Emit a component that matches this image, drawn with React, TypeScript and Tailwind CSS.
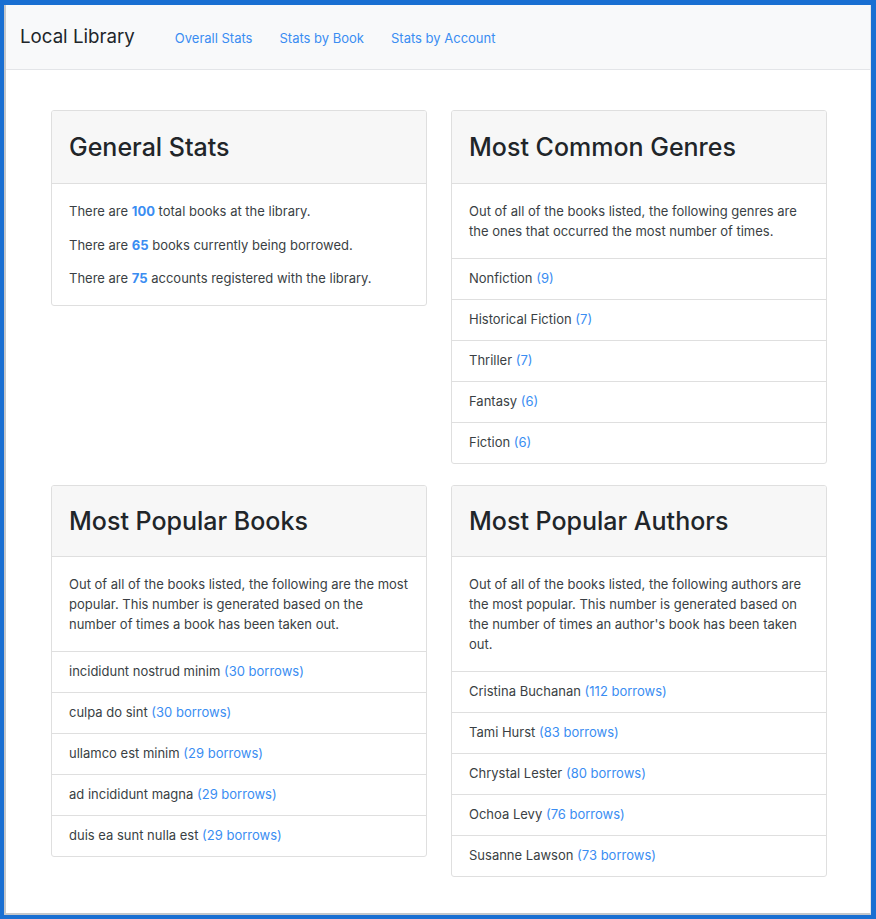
import React from "react";

const font = { fontFamily: "Inter, 'Liberation Sans', Arial, sans-serif" };

function Card({ title, tall = true, children }: { title: string; tall?: boolean; children: React.ReactNode }) {
  return (
    <div className="bg-white border border-[#dfdfdf] rounded-[3px] overflow-hidden">
      <div
        className={
          (tall ? "h-[73px] " : "h-[71px] ") +
          "bg-[#f7f7f7] border-b border-[#dfdfdf] flex items-center px-[17px]"
        }
      >
        <h2 className="text-[25px] font-medium text-[#212529] leading-[32px]">{title}</h2>
      </div>
      {children}
    </div>
  );
}

function Body({ children }: { children: React.ReactNode }) {
  return <div className="px-[17px] pt-[17px] pb-[17px] text-[13px] leading-[20px] text-[#3a3f44]">{children}</div>;
}

function Items({ items }: { items: [string, string][] }) {
  return (
    <ul>
      {items.map(([name, count]) => (
        <li key={name} className="border-t border-[#dfdfdf] h-[41px] flex items-center px-[17px] text-[13px] text-[#3a3f44]">
          <span>
            {name} <span className="text-[#3a8df2]">{count}</span>
          </span>
        </li>
      ))}
    </ul>
  );
}

export default function App() {
  return (
    <div style={font} className="w-[876px] h-[919px] bg-[#196fd2] pt-[5px] pl-[4px] pr-[5px] pb-[4px]">
      <div className="h-full bg-white border-l-2 border-b-2 border-l-[#c4c7cb] border-b-[#c4c7cb] border-r border-r-[#e6e6e6] flex flex-col">
        <nav className="h-[65px] bg-[#f8f9fa] border-b border-[#e3e5e8] flex items-center pl-[14px]">
          <span className="text-[18.7px] text-[#212529]">Local Library</span>
          <div className="ml-[40px] mt-[4px] flex gap-[27px] text-[13px] text-[#3a8df2]">
            <span>Overall Stats</span>
            <span>Stats by Book</span>
            <span>Stats by Account</span>
          </div>
        </nav>
        <main className="pt-[40px] pl-[45px]">
          <div className="w-[776px] grid grid-cols-2 gap-x-[24px] gap-y-[21px] items-start">
            <Card title="General Stats">
              <Body>
                <p className="mb-[13.5px]">
                  There are <span className="font-bold text-[#3a8df2]">100</span> total books at the library.
                </p>
                <p className="mb-[13.5px]">
                  There are <span className="font-bold text-[#3a8df2]">65</span> books currently being borrowed.
                </p>
                <p>
                  There are <span className="font-bold text-[#3a8df2]">75</span> accounts registered with the library.
                </p>
              </Body>
            </Card>
            <Card title="Most Common Genres">
              <Body>
                <p>
                  Out of all of the books listed, the following genres are
                  <br />
                  the ones that occurred the most number of times.
                </p>
              </Body>
              <Items
                items={[
                  ["Nonfiction", "(9)"],
                  ["Historical Fiction", "(7)"],
                  ["Thriller", "(7)"],
                  ["Fantasy", "(6)"],
                  ["Fiction", "(6)"],
                ]}
              />
            </Card>
            <Card title="Most Popular Books" tall={false}>
              <Body>
                <p>
                  Out of all of the books listed, the following are the most
                  <br />
                  popular. This number is generated based on the
                  <br />
                  number of times a book has been taken out.
                </p>
              </Body>
              <Items
                items={[
                  ["incididunt nostrud minim", "(30 borrows)"],
                  ["culpa do sint", "(30 borrows)"],
                  ["ullamco est minim", "(29 borrows)"],
                  ["ad incididunt magna", "(29 borrows)"],
                  ["duis ea sunt nulla est", "(29 borrows)"],
                ]}
              />
            </Card>
            <Card title="Most Popular Authors" tall={false}>
              <Body>
                <p>
                  Out of all of the books listed, the following authors are
                  <br />
                  the most popular. This number is generated based on
                  <br />
                  the number of times an author's book has been taken
                  <br />
                  out.
                </p>
              </Body>
              <Items
                items={[
                  ["Cristina Buchanan", "(112 borrows)"],
                  ["Tami Hurst", "(83 borrows)"],
                  ["Chrystal Lester", "(80 borrows)"],
                  ["Ochoa Levy", "(76 borrows)"],
                  ["Susanne Lawson", "(73 borrows)"],
                ]}
              />
            </Card>
          </div>
        </main>
      </div>
    </div>
  );
}
